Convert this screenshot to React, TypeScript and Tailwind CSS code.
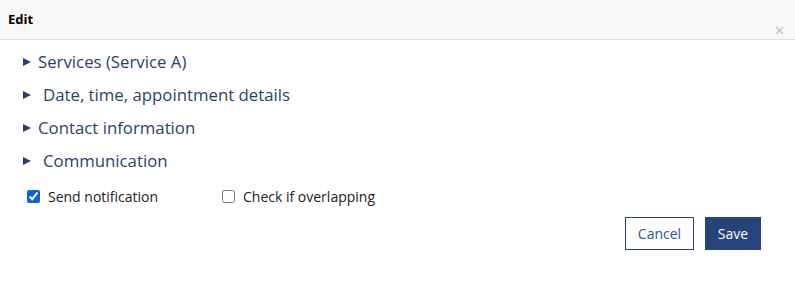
import { useState } from "react";

const sections = [
  { label: "Services (Service A)", extra: false },
  { label: "Date, time, appointment details", extra: true },
  { label: "Contact information", extra: false },
  { label: "Communication", extra: true },
];

const Arrow = () => (
  <svg width="8" height="8" viewBox="0 0 8 8" className="shrink-0">
    <polygon points="0,0 8,4 0,8" fill="#2b3f6c" />
  </svg>
);

const App = () => {
  const [notify, setNotify] = useState(true);
  const [overlap, setOverlap] = useState(false);

  return (
    <div
      className="w-[795px] h-[286px] bg-white text-[#222]"
      style={{ fontFamily: '"Open Sans", sans-serif' }}
    >
      <header className="relative h-[40px] bg-[#f7f7f7] border-b border-[#e2e2e2] flex items-center px-[8px]">
        <h1 className="text-[13px] font-bold text-black">Edit</h1>
        <button className="absolute right-[11px] top-[26px] text-[#c6c6c6]">
          <svg width="9" height="9" viewBox="0 0 9 9">
            <path d="M1 1L8 8M8 1L1 8" stroke="currentColor" strokeWidth="1.6" />
          </svg>
        </button>
      </header>

      <div className="pt-[5px] px-[23px]">
        {sections.map((s) => (
          <div key={s.label} className="h-[33px] flex items-center cursor-pointer">
            <Arrow />
            <span
              className={`text-[16.8px] text-[#2b3f6c] ${s.extra ? "ml-[12px]" : "ml-[7px]"}`}
            >
              {s.label}
            </span>
          </div>
        ))}

        <div className="h-[38px] flex items-center text-[14px] pl-[4px]">
          <label className="flex items-center gap-x-[8px] w-[195px] cursor-pointer">
            <input
              type="checkbox"
              checked={notify}
              onChange={() => setNotify(!notify)}
              className="w-[13px] h-[13px] accent-[#0b63d6] m-0"
            />
            <span>Send notification</span>
          </label>
          <label className="flex items-center gap-x-[8px] cursor-pointer">
            <input
              type="checkbox"
              checked={overlap}
              onChange={() => setOverlap(!overlap)}
              className="w-[13px] h-[13px] m-0"
            />
            <span>Check if overlapping</span>
          </label>
        </div>
      </div>

      <footer className="flex justify-end gap-x-[11px] pr-[34px] mt-[2px]">
        <button className="w-[69px] h-[33px] border border-[#27437a] text-[14px] text-[#2c5597] bg-white">
          Cancel
        </button>
        <button className="w-[56px] h-[33px] bg-[#27437a] text-[14px] text-white">
          Save
        </button>
      </footer>
    </div>
  );
};

export default App;
